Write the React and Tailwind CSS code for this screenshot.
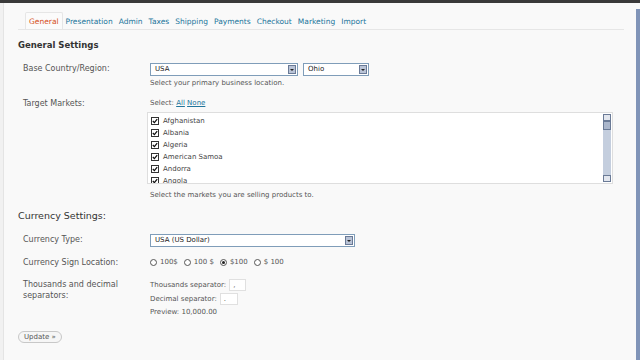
import React from 'react';

const tabs = ['General', 'Presentation', 'Admin', 'Taxes', 'Shipping', 'Payments', 'Checkout', 'Marketing', 'Import'];
const countries = ['Afghanistan', 'Albania', 'Algeria', 'American Samoa', 'Andorra', 'Angola'];

function SelectBox({ value, width }) {
  return (
    <div className={`flex h-[13px] items-center border border-[#7f9db9] bg-white ${width}`}>
      <span className="flex-1 pl-[4px] text-[7px] leading-none text-[#222]">{value}</span>
      <span className="mr-[1px] flex h-[9px] w-[8px] items-center justify-center border border-[#6a7a96] bg-[#b9c3d6]">
        <span className="h-0 w-0 border-x-[2px] border-t-[2px] border-x-transparent border-t-[#222]" />
      </span>
    </div>
  );
}

function CheckBox() {
  return (
    <span className="flex h-[8px] w-[8px] items-center justify-center border border-[#333] bg-white">
      <svg width="6" height="6" viewBox="0 0 6 6">
        <path d="M0.8 3 L2.4 4.6 L5.2 1.2" stroke="#111" strokeWidth="1.3" fill="none" />
      </svg>
    </span>
  );
}

function Radio({ checked, label }) {
  return (
    <span className="flex items-center gap-[3px]">
      <span className="flex h-[7px] w-[7px] items-center justify-center rounded-full border border-[#555] bg-white">
        {checked && <span className="h-[3px] w-[3px] rounded-full bg-[#222]" />}
      </span>
      <span>{label}</span>
    </span>
  );
}

function Row({ label, children, className = '' }) {
  return (
    <div className={`flex ${className}`}>
      <div className="w-[132px] shrink-0 pl-[5px] text-[8px] leading-[11px] text-[#555]">{label}</div>
      <div className="flex-1">{children}</div>
    </div>
  );
}

export default function App() {
  return (
    <div className="flex h-[360px] w-[640px] flex-col overflow-hidden bg-[#f9f9f9] font-['DejaVu_Sans',sans-serif]">
      <div className="h-[3px] bg-[#3a3a3a]" />
      <div className="flex flex-1">
        <div className="w-[4px] border-r border-[#e4e4e4] bg-[#f1f1f1]" />
        <div className="flex-1 pl-[14px] pr-[12px]">
          {/* Tabs */}
          <div className="mt-[9px] flex items-end border-b border-[#e6e6e6] pl-[7px] text-[7.5px] leading-[11px]">
            {tabs.map((t, i) => (
              <span
                key={t}
                className={
                  i === 0
                    ? 'rounded-t-[2px] border-x border-t border-[#e6e6e6] bg-[#fbfbfb] px-[3px] pt-[3px] pb-[2px] text-[#d54e21]'
                    : 'px-[3px] pb-[2px] text-[#21759b]'
                }
              >
                {t}
              </span>
            ))}
          </div>

          <h2 className="mt-[9px] text-[8.5px] font-bold leading-[12px] text-[#333]">General Settings</h2>

          <Row label="Base Country/Region:" className="mt-[12px]">
            <div className="flex gap-[5px]">
              <SelectBox value="USA" width="w-[148px]" />
              <SelectBox value="Ohio" width="w-[66px]" />
            </div>
            <p className="mt-[2px] text-[7px] leading-[10px] text-[#555]">Select your primary business location.</p>
          </Row>

          <Row label="Target Markets:" className="mt-[10px]">
            <p className="text-[7px] leading-[10px] text-[#555]">
              Select: <span className="text-[#21759b] underline">All</span>{' '}
              <span className="text-[#21759b] underline">None</span>
            </p>
          </Row>

          <div className="ml-[129px] mt-[3px] flex h-[72px] w-[466px] border border-[#dedede] bg-white">
            <div className="flex-1 overflow-hidden pl-[3px] pt-[2px]">
              {countries.map((c) => (
                <div key={c} className="flex h-[12px] items-center gap-[4px] text-[7px] text-[#444]">
                  <CheckBox />
                  <span>{c}</span>
                </div>
              ))}
            </div>
            <div className="my-[1px] mr-[1px] flex w-[8px] flex-col bg-[#c4cede]">
              <span className="h-[7px] border border-[#6a7a96] bg-[#e2e6ee]" />
              <span className="h-[9px] border border-[#6a7a96] bg-[#aab6cb]" />
              <span className="flex-1" />
              <span className="h-[7px] border border-[#6a7a96] bg-[#e2e6ee]" />
            </div>
          </div>
          <p className="ml-[132px] mt-[6px] text-[7px] leading-[10px] text-[#555]">Select the markets you are selling products to.</p>

          <h2 className="mt-[9px] text-[9.5px] leading-[14px] text-[#333]">Currency Settings:</h2>

          <Row label="Currency Type:" className="mt-[11px]">
            <SelectBox value="USA (US Dollar)" width="w-[205px]" />
          </Row>

          <Row label="Currency Sign Location:" className="mt-[10px]">
            <div className="flex gap-[6px] text-[7px] leading-[11px] text-[#555]">
              <Radio label="100$" />
              <Radio label="100 $" />
              <Radio label="$100" checked />
              <Radio label="$ 100" />
            </div>
          </Row>

          <Row label={<>Thousands and decimal<br />separators:</>} className="mt-[11px]">
            <div className="flex items-center gap-[3px] text-[7px] text-[#555]">
              <span>Thousands separator:</span>
              <span className="flex h-[12px] w-[17px] items-center border border-[#e0e0e0] bg-white pl-[3px]">,</span>
            </div>
            <div className="mt-[2px] flex items-center gap-[3px] text-[7px] text-[#555]">
              <span>Decimal separator:</span>
              <span className="flex h-[12px] w-[18px] items-center border border-[#e0e0e0] bg-white pl-[3px]">.</span>
            </div>
            <p className="mt-[2px] text-[7px] leading-[10px] text-[#555]">Preview: 10,000.00</p>
          </Row>

          <button className="mt-[14px] h-[12px] rounded-full border border-[#c8c8c8] bg-[#f6f6f6] px-[5px] text-[7px] leading-none text-[#555]">
            Update »
          </button>
        </div>
        <div className="mt-[6px] w-[4px] bg-[#8094b8]" />
      </div>
    </div>
  );
}
